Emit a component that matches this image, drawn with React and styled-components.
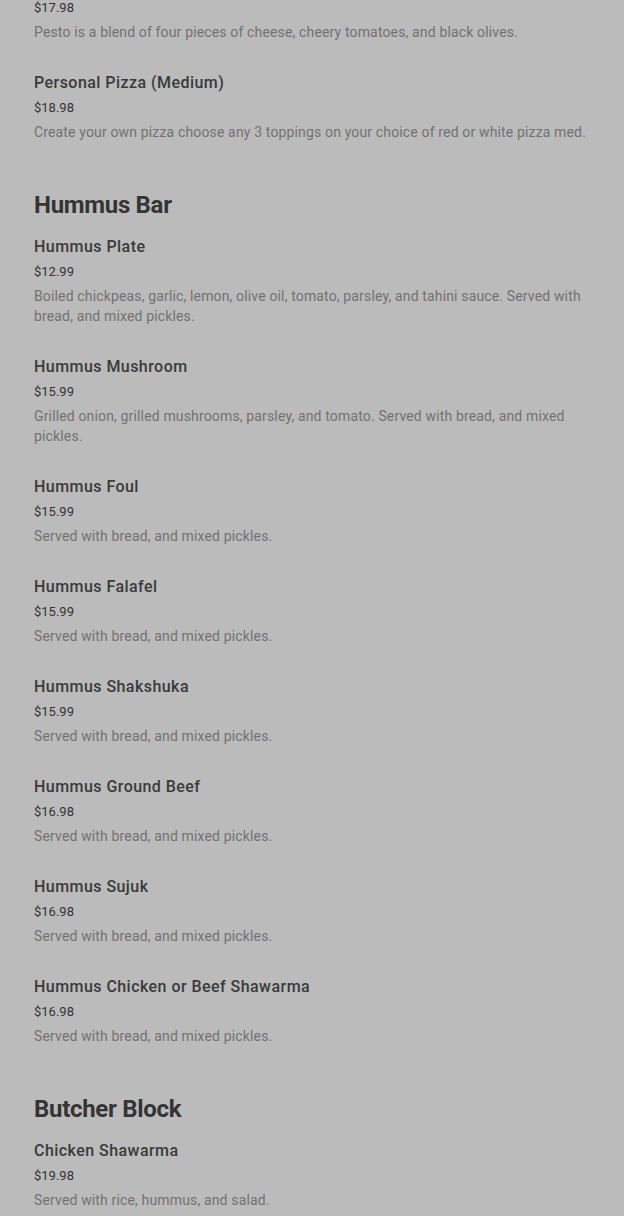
import React from 'react';
import styled, { createGlobalStyle } from 'styled-components';

const sections = [
  {
    title: null,
    items: [
      {
        price: '$17.98',
        description: 'Pesto is a blend of four pieces of cheese, cheery tomatoes, and black olives.',
      },
      {
        name: 'Personal Pizza (Medium)',
        price: '$18.98',
        description: 'Create your own pizza choose any 3 toppings on your choice of red or white pizza med.',
      },
    ],
  },
  {
    title: 'Hummus Bar',
    items: [
      {
        name: 'Hummus Plate',
        price: '$12.99',
        description: 'Boiled chickpeas, garlic, lemon, olive oil, tomato, parsley, and tahini sauce. Served with bread, and mixed pickles.',
      },
      {
        name: 'Hummus Mushroom',
        price: '$15.99',
        description: 'Grilled onion, grilled mushrooms, parsley, and tomato. Served with bread, and mixed pickles.',
      },
      { name: 'Hummus Foul', price: '$15.99', description: 'Served with bread, and mixed pickles.' },
      { name: 'Hummus Falafel', price: '$15.99', description: 'Served with bread, and mixed pickles.' },
      { name: 'Hummus Shakshuka', price: '$15.99', description: 'Served with bread, and mixed pickles.' },
      { name: 'Hummus Ground Beef', price: '$16.98', description: 'Served with bread, and mixed pickles.' },
      { name: 'Hummus Sujuk', price: '$16.98', description: 'Served with bread, and mixed pickles.' },
      { name: 'Hummus Chicken or Beef Shawarma', price: '$16.98', description: 'Served with bread, and mixed pickles.' },
    ],
  },
  {
    title: 'Butcher Block',
    items: [
      { name: 'Chicken Shawarma', price: '$19.98', description: 'Served with rice, hummus, and salad.' },
    ],
  },
];

function App() {
  return (
    <>
      <GlobalStyle />
      <Page>
        {sections.map((section, i) => (
          <Section key={i}>
            {section.title && <Heading>{section.title}</Heading>}
            {section.items.map((item, j) => (
              <Item key={j}>
                {item.name && <Name>{item.name}</Name>}
                <Price>{item.price}</Price>
                <Description>{item.description}</Description>
              </Item>
            ))}
          </Section>
        ))}
      </Page>
    </>
  );
}

const GlobalStyle = createGlobalStyle`
  html, body {
    margin: 0;
    padding: 0;
    background: #bbbbbb;
    height: 1216px;
    overflow: hidden;
  }
  body {
    font-family: Roboto, "Liberation Sans", sans-serif;
  }
`;

const Page = styled.div`
  display: flex;
  flex-direction: column;
  padding: 0 34px;
  margin-top: -1px;
`;

const Section = styled.section`
  display: flex;
  flex-direction: column;
  margin-bottom: 17px;
`;

const Heading = styled.h2`
  margin: 0 0 17px;
  font-size: 24px;
  line-height: 30px;
  font-weight: 700;
  letter-spacing: -0.3px;
  color: #343434;
`;

const Item = styled.div`
  display: flex;
  flex-direction: column;
  margin-bottom: 31px;
`;

const Name = styled.div`
  font-size: 16px;
  line-height: 20px;
  font-weight: 500;
  letter-spacing: 0.45px;
  color: #3a3a3a;
  margin-bottom: 6px;
`;

const Price = styled.div`
  font-size: 13px;
  line-height: 18px;
  color: #333333;
  margin-bottom: 5px;
`;

const Description = styled.div`
  font-size: 14px;
  line-height: 20px;
  letter-spacing: 0.15px;
  color: #727272;
`;

export default App;
